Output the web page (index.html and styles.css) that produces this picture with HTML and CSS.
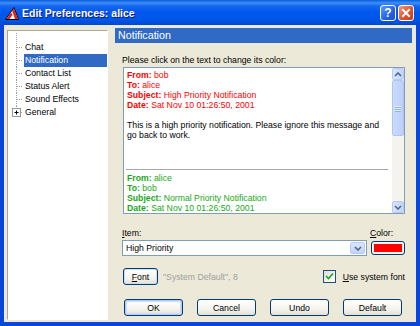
FILE: index.html
```html
<!DOCTYPE html>
<html>
<head>
<meta charset="utf-8">
<link rel="stylesheet" href="styles.css">
</head>
<body>
<div class="window">
  <div class="titlebar">
    <svg class="app-icon" width="14" height="13" viewBox="0 0 14 13">
      <polygon points="0.5,12.5 9,0.5 13.5,12.5" fill="#fff" stroke="#000" stroke-width="1"/>
      <polygon points="1.5,12 6,5.5 7.5,8 4.5,12" fill="#e0201b"/>
      <polygon points="7,3.5 9,1.5 12.8,12 10,12" fill="#e0201b"/>
    </svg>
    <span class="title">Edit Preferences: alice</span>
    <div class="tb-buttons">
      <div class="tb-btn help">?</div>
      <div class="tb-btn close">
        <svg width="14" height="14" viewBox="0 0 14 14"><path d="M4 4 L10 10 M10 4 L4 10" stroke="#fff" stroke-width="2" stroke-linecap="square"/></svg>
      </div>
    </div>
  </div>
  <div class="frame">
    <div class="tree">
      <div class="tree-top"><svg width="16" height="10"><line x1="8.5" y1="2" x2="8.5" y2="10" class="dot"/></svg></div>
      <div class="tree-row"><svg width="16" height="13"><line x1="8.5" y1="0" x2="8.5" y2="13" class="dot"/><line x1="9" y1="6.5" x2="15" y2="6.5" class="dot"/></svg><span class="node">Chat</span></div>
      <div class="tree-row"><svg width="16" height="13"><line x1="8.5" y1="0" x2="8.5" y2="13" class="dot"/><line x1="9" y1="6.5" x2="15" y2="6.5" class="dot"/></svg><span class="node selected">Notification</span></div>
      <div class="tree-row"><svg width="16" height="13"><line x1="8.5" y1="0" x2="8.5" y2="13" class="dot"/><line x1="9" y1="6.5" x2="15" y2="6.5" class="dot"/></svg><span class="node">Contact List</span></div>
      <div class="tree-row"><svg width="16" height="13"><line x1="8.5" y1="0" x2="8.5" y2="13" class="dot"/><line x1="9" y1="6.5" x2="15" y2="6.5" class="dot"/></svg><span class="node">Status Alert</span></div>
      <div class="tree-row"><svg width="16" height="13"><line x1="8.5" y1="0" x2="8.5" y2="13" class="dot"/><line x1="9" y1="6.5" x2="15" y2="6.5" class="dot"/></svg><span class="node">Sound Effects</span></div>
      <div class="tree-row"><svg width="16" height="13"><line x1="8.5" y1="0" x2="8.5" y2="2" class="dot"/><line x1="13" y1="6.5" x2="15" y2="6.5" class="dot"/><rect x="4.5" y="2.5" width="8" height="8" fill="#fff" stroke="#919b9c"/><path d="M6.5 6.5 H10.5 M8.5 4.5 V8.5" stroke="#000"/></svg><span class="node">General</span></div>
    </div>
    <div class="main">
      <div class="header">Notification</div>
      <div class="prompt">Please click on the text to change its color:</div>
      <div class="preview">
        <div class="preview-text">
          <div class="msg high">
            <div><b>From:</b> bob</div>
            <div><b>To:</b> alice</div>
            <div><b>Subject:</b> High Priority Notification</div>
            <div><b>Date:</b> Sat Nov 10 01:26:50, 2001</div>
          </div>
          <div class="body-text">This is a high priority notification. Please ignore this message and go back to work.</div>
          <div class="sep"></div>
          <div class="msg normal">
            <div><b>From:</b> alice</div>
            <div><b>To:</b> bob</div>
            <div><b>Subject:</b> Normal Priority Notification</div>
            <div><b>Date:</b> Sat Nov 10 01:26:50, 2001</div>
          </div>
        </div>
        <div class="scrollbar">
          <div class="sb-btn"><svg width="8" height="5" viewBox="0 0 8 5"><path d="M1 4 L4 1 L7 4" stroke="#4d6185" stroke-width="1.5" fill="none"/></svg></div>
          <div class="sb-thumb"><div class="grip"></div><div class="grip"></div><div class="grip"></div></div>
          <div class="sb-track"></div>
          <div class="sb-btn"><svg width="8" height="5" viewBox="0 0 8 5"><path d="M1 1 L4 4 L7 1" stroke="#4d6185" stroke-width="1.5" fill="none"/></svg></div>
        </div>
      </div>
      <div class="item-grid">
        <span class="lbl"><u>I</u>tem:</span>
        <span class="lbl color-lbl"><u>C</u>olor:</span>
        <div class="combo">
          <span class="combo-text">High Priority</span>
          <div class="combo-btn"><svg width="8" height="5" viewBox="0 0 8 5"><path d="M1 1 L4 4 L7 1" stroke="#4d6185" stroke-width="1.5" fill="none"/></svg></div>
        </div>
        <div class="color-btn"><div class="swatch"></div></div>
      </div>
      <div class="font-row">
        <div class="btn font-btn"><u>F</u>ont</div>
        <span class="font-desc">"System Default", 8</span>
        <div class="checkbox"><svg width="9" height="9" viewBox="0 0 9 9"><path d="M1 4 L3.5 6.5 L8 1.5" stroke="#21a121" stroke-width="1.6" fill="none"/></svg></div>
        <span class="chk-lbl"><u>U</u>se system font</span>
      </div>
      <div class="buttons">
        <div class="btn default">OK</div>
        <div class="btn">Cancel</div>
        <div class="btn">Undo</div>
        <div class="btn">Default</div>
      </div>
    </div>
  </div>
</div>
</body>
</html>
```
FILE: styles.css
```css
* { box-sizing: border-box; }
body {
  margin: 0;
  font-family: "Liberation Sans", Arial, sans-serif;
  font-size: 8.7px;
  color: #000;
}
.window {
  width: 420px;
  height: 326px;
  display: flex;
  flex-direction: column;
  background: #ece9d8;
}
.titlebar {
  height: 25px;
  flex: none;
  display: flex;
  align-items: center;
  padding-left: 5px;
  background: linear-gradient(#0a5ddc 0, #3e8ef7 3px, #1567f0 6px, #0058ee 12px, #0055e5 20px, #0048d0 25px);
}
.app-icon { margin-top: 1px; }
.title {
  margin-left: 3px;
  color: #fff;
  font-weight: bold;
  font-size: 10.5px;
  text-shadow: 1px 1px #0a1883;
}
.tb-buttons {
  margin-left: auto;
  display: flex;
  gap: 2px;
  padding-right: 6px;
}
.tb-btn {
  width: 16px;
  height: 16px;
  border: 1px solid #fff;
  border-radius: 3px;
  display: flex;
  align-items: center;
  justify-content: center;
  color: #fff;
  font-weight: bold;
  font-size: 12px;
}
.help { background: linear-gradient(135deg, #5b9cff, #2660e8 60%, #1b4fd6); }
.close { background: linear-gradient(135deg, #f09a7c, #e0542b 55%, #c43d18); }
.frame {
  flex: 1;
  display: flex;
  border: 4px solid #0a45dc;
  border-top: 0;
}
.tree {
  margin: 5px 0 2px 3px;
  width: 101px;
  background: #fff;
  border: 1px solid;
  border-color: #aca899 #fff #fff #aca899;
}
.tree-top { height: 10px; }
.tree-top svg, .tree-row svg { display: block; flex: none; }
.dot {
  stroke: #a0a0a0;
  stroke-width: 1;
  stroke-dasharray: 1 1;
  shape-rendering: crispEdges;
}
.tree-row {
  height: 13px;
  display: flex;
  align-items: center;
}
.node {
  line-height: 13px;
  padding-left: 1px;
  white-space: nowrap;
}
.node.selected {
  background: #316ac5;
  color: #fff;
  flex: 1;
  margin-right: 0;
}
.main {
  flex: 1;
  margin: 3px 4px 0 7px;
  display: flex;
  flex-direction: column;
}
.header {
  height: 15px;
  background: #316ac5;
  color: #fff;
  font-size: 10.7px;
  line-height: 15px;
  padding-left: 3px;
}
.prompt {
  margin: 12px 0 0 7px;
  line-height: 10px;
}
.preview {
  margin: 2px 0 0 8px;
  width: 282px;
  height: 147px;
  border: 1px solid #7f9db9;
  background: #fff;
  display: flex;
}
.preview-text {
  flex: 1;
  padding: 2px 0 0 3px;
  line-height: 10px;
  overflow: hidden;
}
.high { color: #ff0000; }
.normal { color: #17a817; }
.body-text { margin-top: 10px; padding-right: 8px; }
.sep {
  height: 1px;
  background: #a7a6aa;
  margin: 29px 4px 0 -1px;
}
.msg.normal { margin-top: 3px; }
.scrollbar {
  width: 12px;
  display: flex;
  flex-direction: column;
  background: #f4f3ee;
}
.sb-btn {
  height: 12px;
  background: linear-gradient(90deg, #dbe6fd, #c1d3fb);
  border: 1px solid #b6cbf7;
  border-radius: 2px;
  display: flex;
  align-items: center;
  justify-content: center;
}
.sb-thumb {
  height: 56px;
  background: linear-gradient(90deg, #cbdafc, #bccffa);
  border: 1px solid #b1c5f4;
  border-radius: 2px;
  display: flex;
  flex-direction: column;
  align-items: center;
  justify-content: center;
  gap: 1px;
}
.grip { width: 6px; height: 1px; background: #e8effd; box-shadow: 0 1px #8cb0f8; }
.sb-track { flex: 1; }
.item-grid {
  margin: 14px 0 0 7px;
  display: grid;
  grid-template-columns: 245px 34px;
  column-gap: 4px;
  row-gap: 2px;
  align-items: center;
}
.lbl { line-height: 10px; }
.color-lbl { margin-left: -1px; }
.combo {
  height: 16px;
  border: 1px solid #7f9db9;
  background: #fff;
  display: flex;
  align-items: center;
}
.combo-text { padding-left: 3px; flex: 1; }
.combo-btn {
  width: 15px;
  height: 12px;
  margin-right: 1px;
  background: linear-gradient(#dbe6fd, #c1d3fb);
  border: 1px solid #b6cbf7;
  border-radius: 2px;
  display: flex;
  align-items: center;
  justify-content: center;
}
.color-btn {
  height: 14px;
  border: 1px solid #003c74;
  border-radius: 3px;
  background: #f4f3ee;
  padding: 2px;
}
.swatch { height: 100%; background: #ff0000; }
.font-row {
  margin-top: 12px;
  display: flex;
  align-items: center;
  padding-right: 7px;
}
.btn {
  height: 17px;
  width: 59px;
  border: 1px solid #003c74;
  border-radius: 3px;
  background: linear-gradient(#ffffff, #f5f4ee 60%, #e3e0d4);
  display: flex;
  align-items: center;
  justify-content: center;
  line-height: 10px;
}
.btn.default { box-shadow: inset 0 0 0 1px #b6cdf6, inset 0 0 0 2px #cfdcf7; }
.font-btn { width: 35px; margin-left: 8px; box-shadow: inset 0 0 0 1px #cfdcf7; }
.font-desc { margin-left: 5px; color: #a0a0a0; }
.checkbox {
  margin-left: auto;
  width: 13px;
  height: 13px;
  border: 1px solid #1c5180;
  background: linear-gradient(135deg, #dcdcd7, #fff);
  display: flex;
  align-items: center;
  justify-content: center;
}
.chk-lbl { margin-left: 7px; }
.buttons {
  margin: 14px 0 0 9px;
  display: flex;
  gap: 14px;
}
```
